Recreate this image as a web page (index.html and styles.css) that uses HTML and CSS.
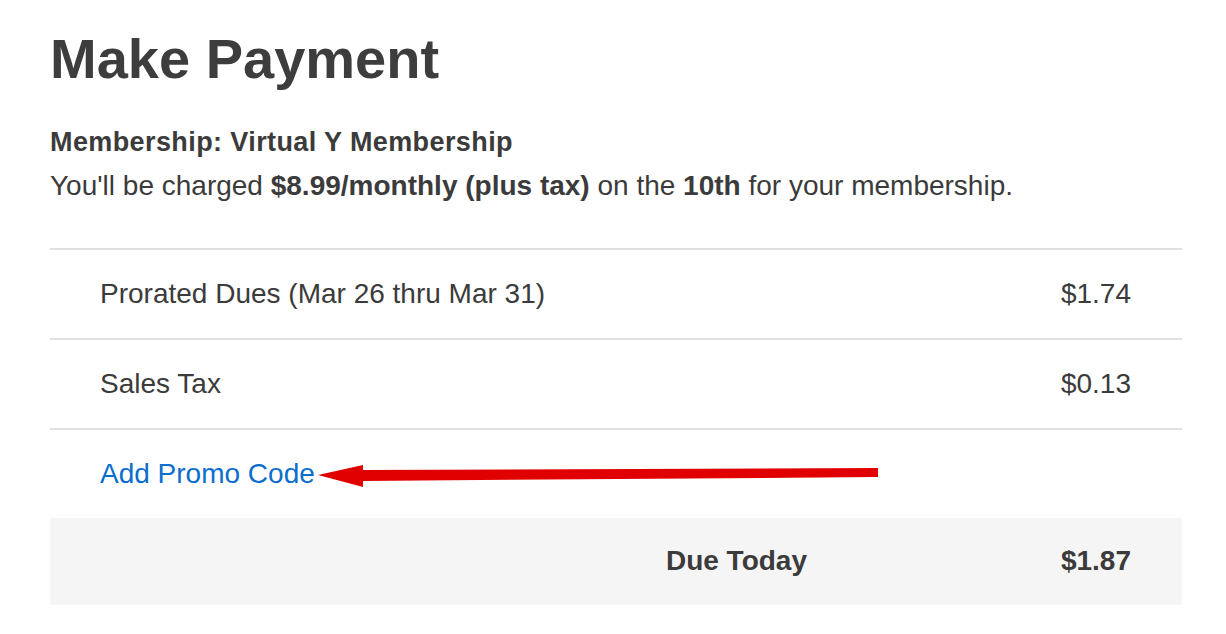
FILE: index.html
```html
<!DOCTYPE html>
<html lang="en">
<head>
    <meta charset="UTF-8">
    <meta name="viewport" content="width=device-width, initial-scale=1.0">
    <title>Make Payment</title>
    <link rel="stylesheet" href="styles.css">
</head>
<body>
    <div class="container">
        <h1>Make Payment</h1>
        <p class="plan">Membership: Virtual Y Membership</p>
        <p class="charge">You'll be charged <strong>$8.99/monthly (plus tax)</strong> on the <strong>10th</strong> for your membership.</p>

        <div class="summary">
            <div class="row">
                <span class="label">Prorated Dues (Mar 26 thru Mar 31)</span>
                <span class="amount">$1.74</span>
            </div>
            <div class="row">
                <span class="label">Sales Tax</span>
                <span class="amount">$0.13</span>
            </div>
            <div class="row promo">
                <a href="#" class="promo-link">Add Promo Code</a>
                <svg class="arrow" width="566" height="28" viewBox="0 0 566 28">
                    <polygon points="2,13 47,3 47,8 562,6 562,15 47,19 47,25" fill="#e00000"/>
                </svg>
            </div>
            <div class="row total">
                <span class="label">Due Today</span>
                <span class="amount">$1.87</span>
            </div>
        </div>
    </div>
</body>
</html>
```

FILE: styles.css
```css
body {
    font-family: "Liberation Sans", Arial, sans-serif;
    margin: 0;
    background-color: white;
    color: #3b3b3b;
}

.container {
    width: 1132px;
    padding: 27px 0 0 50px;
}

h1 {
    font-size: 56px;
    line-height: 64px;
    margin: 0 0 33px;
    color: #3d3d3d;
}

.plan {
    font-size: 27px;
    font-weight: bold;
    letter-spacing: 0.4px;
    line-height: 36px;
    margin: 0 0 8px;
}

.charge {
    font-size: 28px;
    line-height: 36px;
    margin: 0 0 44px;
}

.summary {
    border-top: 2px solid #e0e0e0;
}

.row {
    display: flex;
    justify-content: space-between;
    font-size: 28px;
    line-height: 40px;
    padding: 24px 51px 24px 50px;
    border-bottom: 2px solid #e0e0e0;
}

.promo {
    position: relative;
    border-bottom: none;
}

.promo-link {
    color: #0b6ecc;
    text-decoration: none;
}

.arrow {
    position: absolute;
    left: 266px;
    top: 32px;
}

.total {
    justify-content: flex-end;
    gap: 50px;
    background-color: #f5f5f5;
    border-bottom: none;
    border-radius: 3px;
    font-weight: bold;
    padding-top: 23px;
    padding-bottom: 24px;
}

.total .amount {
    width: 274px;
    text-align: right;
}
```
